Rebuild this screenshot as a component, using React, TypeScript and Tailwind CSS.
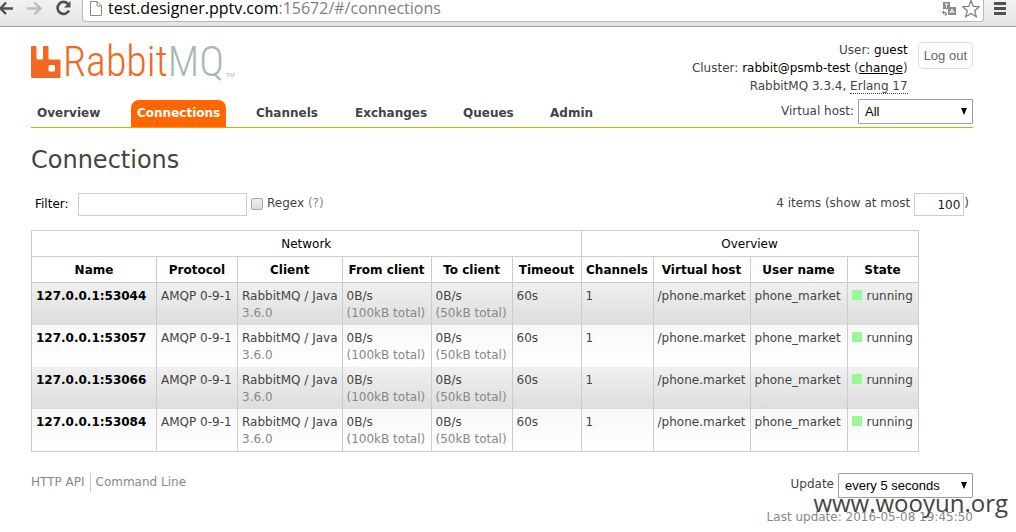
import type { ReactNode } from "react";

const tabs = [
  { name: "Overview", width: "w-[100px]" },
  { name: "Connections", width: "w-[119px]" },
  { name: "Channels", width: "w-[99px]" },
  { name: "Exchanges", width: "w-[108px]" },
  { name: "Queues", width: "w-[87px]" },
  { name: "Admin", width: "w-[56px]" },
];

const columns = [
  { name: "Name", width: "w-[125px]" },
  { name: "Protocol", width: "w-[81px]" },
  { name: "Client", width: "w-[104px]" },
  { name: "From client", width: "w-[89px]" },
  { name: "To client", width: "w-[81px]" },
  { name: "Timeout", width: "w-[69px]" },
  { name: "Channels", width: "w-[72px]" },
  { name: "Virtual host", width: "w-[97px]" },
  { name: "User name", width: "w-[97px]" },
  { name: "State", width: "w-[71px]" },
];

const connections = ["53044", "53057", "53066", "53084"].map((port) => `127.0.0.1:${port}`);

function BrowserBar() {
  return (
    <div className="flex h-[27px] items-start border-b border-[#a0a0a0] bg-linear-to-b from-[#f2f2f2] to-[#e4e4e4]">
      <div className="flex h-4 w-[82px] shrink-0 items-center">
        <button aria-label="Back" className="w-[26px]">
          <svg width="14" height="16" viewBox="0 0 14 16" fill="none" stroke="#505050" strokeWidth="2.4">
            <path d="M13 8.500H1M6 2.500L0.500 8.500L6 14" />
          </svg>
        </button>
        <button aria-label="Forward" className="w-[29px]">
          <svg width="16" height="16" viewBox="0 0 16 16" fill="none" stroke="#bdbdbd" strokeWidth="2.4">
            <path d="M1 8.500H14M8.500 2.500L14.500 8.500L8.500 14" />
          </svg>
        </button>
        <button aria-label="Reload">
          <svg width="17" height="16" viewBox="0 0 17 16" fill="none">
            <path d="M13.300 4.200A6 6 0 1 0 14 10.500" stroke="#505050" strokeWidth="2.600" />
            <path d="M15.500 1V7.500H9Z" fill="#505050" />
          </svg>
        </button>
      </div>
      <div className="flex h-[22px] min-w-0 flex-1 items-start rounded-b border border-t-0 border-[#b8b8b8] bg-white pl-[7px]">
        <svg width="12" height="17" viewBox="0 0 12 17" fill="none" stroke="#8a8a8a" strokeWidth="1">
          <path d="M0.500 1.500H7L11.500 6V15.500H0.500ZM7 1.500V6H11.500" />
        </svg>
        <div className="ml-[6px] flex-1 font-['Open_Sans',sans-serif] text-[16px] leading-[17px] whitespace-nowrap text-black">
          test.designer.pptv.com<span className="text-[#808080]">:15672/#/connections</span>
        </div>
        <svg width="14" height="17" viewBox="0 0 14 17" className="mr-[6px]">
          <path d="M1 2H8V9H1Z" fill="#8a8a8a" />
          <path d="M3 4H6.500M4.500 4V7.500" stroke="#fff" fill="none" />
          <path d="M6 7H14V15H6Z" fill="#8a8a8a" />
          <path d="M8 13L10 9L12 13M8.500 12H11.500" stroke="#fff" fill="none" />
          <path d="M1.500 10.500V14H4.500M3 12L5 14L3 16M0 12.500H3" stroke="#8a8a8a" fill="none" />
        </svg>
        <svg width="18" height="18" viewBox="0 0 18 18" fill="none" stroke="#7c7c7c" strokeWidth="1.200" className="mr-[3px]">
          <path d="M9 0.500L11.300 6.400L17.400 6.700L12.700 10.700L14.300 16.700L9 13.400L3.700 16.700L5.300 10.700L0.600 6.700L6.700 6.400Z" />
        </svg>
      </div>
      <button aria-label="Menu" className="mx-[9px]">
        <svg width="14" height="16" viewBox="0 0 14 16" fill="#505050">
          <path d="M1 2H13V5H1ZM1 7H13V10H1ZM1 12H13V15H1Z" />
        </svg>
      </button>
    </div>
  );
}

function Logo() {
  return (
    <a href="#/" aria-label="RabbitMQ" className="flex h-[36px] items-end">
      <svg width="30" height="32" viewBox="0 0 30 32" fill="#f26822" className="mb-[2px]">
        <path
          fillRule="evenodd"
          d="M1 0H4.500Q5.500 0 5.500 1V12Q5.500 13.500 7 13.500H10.500Q12 13.500 12 12V1Q12 0 13 0H16.500Q17.500 0 17.500 1V12Q17.500 13.500 19 13.500H28.500Q29.500 13.500 29.500 14.500V31Q29.500 32 28.500 32H1Q0 32 0 31V1Q0 0 1 0ZM19 19Q17.500 19 17.500 20.500V24Q17.500 25.500 19 25.500H22.500Q24 25.500 24 24V20.500Q24 19 22.500 19Z"
        />
      </svg>
      <span className="ml-[2px] font-['Roboto_Condensed','Liberation_Sans_Narrow',sans-serif] text-[42px] leading-[36px] font-light text-[#f26822]">
        Rabbit<span className="text-[#a9b8b3]">MQ</span>
      </span>
      <span className="mb-[2px] ml-[2px] font-['Liberation_Sans',sans-serif] text-[6px] leading-[6px] text-[#a9b8b3]">TM</span>
    </a>
  );
}

function Dropdown({ id, options, width }: { id: string; options: string[]; width: string }) {
  return (
    <span className={`relative inline-flex ${width}`}>
      <select
        id={id}
        className="h-[25px] w-full appearance-none rounded-[1px] border border-[#a0a0a0] bg-white pl-[6px] font-['Liberation_Sans',Arial,sans-serif] text-[13px] leading-[23px] text-black"
      >
        {options.map((option) => (
          <option key={option}>{option}</option>
        ))}
      </select>
      <svg width="6" height="7" viewBox="0 0 6 7" className="pointer-events-none absolute top-[9px] right-[6px]">
        <path d="M0 0H6L3 7Z" fill="#000" />
      </svg>
    </span>
  );
}

function Cell({ children, className = "" }: { children: ReactNode; className?: string }) {
  return (
    <td className={`border-x border-[#ccc] px-1 pt-[5px] pb-[3px] align-top whitespace-nowrap ${className}`}>
      {children}
    </td>
  );
}

export default function App() {
  return (
    <div className="bg-white font-['DejaVu_Sans',Verdana,sans-serif] text-[12px] leading-[17px] text-[#444]">
      <BrowserBar />
      <div className="pr-[43px] pl-[31px]">
        <header className="flex items-end justify-between border-b border-[#f90] pt-[14px]">
          <div className="flex flex-col gap-[20px]">
            <Logo />
            <nav className="flex">
              {tabs.map((tab) => (
                <div key={tab.name} className={tab.width}>
                  <a
                    href={`#/${tab.name.toLowerCase()}`}
                    className={`inline-block h-[27px] rounded-t-lg px-[6px] pt-[5px] align-top font-bold ${
                      tab.name === "Connections" ? "bg-[#f60] text-white" : ""
                    }`}
                  >
                    {tab.name}
                  </a>
                </div>
              ))}
            </nav>
          </div>
          <div className="flex flex-col pb-[3px]">
            <div className="flex items-start justify-end gap-[10px]">
              <div className="text-right leading-[18px]">
                <div>
                  User: <span className="text-black">guest</span>
                </div>
                <div>
                  Cluster: <span className="text-black">rabbit@psmb-test</span> (
                  <a href="#/cluster-name" className="text-black underline">
                    change
                  </a>
                  )
                </div>
                <div>
                  RabbitMQ 3.3.4, <span className="border-b border-dotted border-[#444]">Erlang 17</span>
                </div>
              </div>
              <button className="mt-px h-[27px] rounded-[5px] border border-[#ddd] px-[5px] font-['Liberation_Sans',Arial,sans-serif] text-[13px] text-[#666]">
                Log out
              </button>
            </div>
            <div className="mt-1 flex items-center justify-end gap-1">
              <label htmlFor="vhost">Virtual host:</label>
              <Dropdown id="vhost" options={["All"]} width="w-[115px]" />
            </div>
          </div>
        </header>

        <main>
          <h1 className="mt-[16px] text-[24px] leading-8">Connections</h1>
          <div className="mt-[17px] flex items-start justify-between pr-1 pl-1 leading-[21px]">
            <div className="flex items-start">
              <label htmlFor="filter" className="w-[43px] leading-[23px] text-black">
                Filter:
              </label>
              <input id="filter" type="text" className="h-[23px] w-[169px] border border-[#ccc] px-1" />
              <input
                id="regex"
                type="checkbox"
                className="mt-[5px] mr-1 ml-1 h-3 w-3 appearance-none rounded-[2px] border border-[#a8a8a8] bg-linear-to-b from-[#eee] to-[#ddd]"
              />
              <label htmlFor="regex">
                Regex <span className="text-[#888]">(?)</span>
              </label>
            </div>
            <div className="flex items-start">
              <label htmlFor="limit" className="mr-1">
                4 items (show at most
              </label>
              <input
                id="limit"
                type="text"
                defaultValue="100"
                className="h-[23px] w-[50px] border border-[#ccc] pr-[3px] text-right text-[12px] text-[#222]"
              />
              <span>)</span>
            </div>
          </div>

          <table className="mt-[14px] table-fixed border-collapse border border-[#ccc]">
            <colgroup>
              {columns.map((column) => (
                <col key={column.name} className={column.width} />
              ))}
            </colgroup>
            <thead className="text-black">
              <tr>
                <th colSpan={6} className="border border-[#ccc] px-1 pt-[5px] pb-[3px] font-normal">
                  Network
                </th>
                <th colSpan={4} className="border border-[#ccc] px-1 pt-[5px] pb-[3px] font-normal">
                  Overview
                </th>
              </tr>
              <tr>
                {columns.map((column) => (
                  <th key={column.name} className="border border-[#ccc] pt-[5px] pb-[3px] font-bold whitespace-nowrap">
                    {column.name}
                  </th>
                ))}
              </tr>
            </thead>
            <tbody>
              {connections.map((name) => (
                <tr
                  key={name}
                  className="bg-linear-to-b odd:from-[#f0f0f0] odd:to-[#dddddd] even:from-[#f8f8f8] even:to-white"
                >
                  <Cell className="font-bold text-black">
                    <a href={`#/connections/${name}`}>{name}</a>
                  </Cell>
                  <Cell>AMQP 0-9-1</Cell>
                  <Cell>
                    RabbitMQ / Java
                    <div className="text-[#888]">3.6.0</div>
                  </Cell>
                  <Cell>
                    0B/s
                    <div className="text-[#888]">(100kB total)</div>
                  </Cell>
                  <Cell>
                    0B/s
                    <div className="text-[#888]">(50kB total)</div>
                  </Cell>
                  <Cell>60s</Cell>
                  <Cell>1</Cell>
                  <Cell>/phone.market</Cell>
                  <Cell>phone_market</Cell>
                  <Cell>
                    <div className="flex items-start gap-[5px]">
                      <span className="mt-[2px] h-[10px] w-[10px] bg-[#98f898]" />
                      running
                    </div>
                  </Cell>
                </tr>
              ))}
            </tbody>
          </table>
        </main>

        <footer className="mt-[21px] flex items-start justify-between text-[#888]">
          <div className="flex leading-[19px]">
            <a href="/api/" className="border-r border-[#ccc] pr-[5px]">
              HTTP API
            </a>
            <a href="/cli/" className="pl-[5px]">
              Command Line
            </a>
          </div>
          <div className="relative flex flex-col items-end">
            <div className="flex items-start gap-1">
              <label htmlFor="update" className="leading-[23px] text-[#444]">
                Update
              </label>
              <Dropdown id="update" options={["every 5 seconds"]} width="w-[135px]" />
            </div>
            <div className="mt-[11px]">Last update: 2016-05-08 19:45:50</div>
            <div className="pointer-events-none absolute top-[15px] -right-[35px] font-['Open_Sans',sans-serif] text-[24px] leading-[30px] text-[#444]">
              www.wooyun.org
            </div>
          </div>
        </footer>
      </div>
    </div>
  );
}
